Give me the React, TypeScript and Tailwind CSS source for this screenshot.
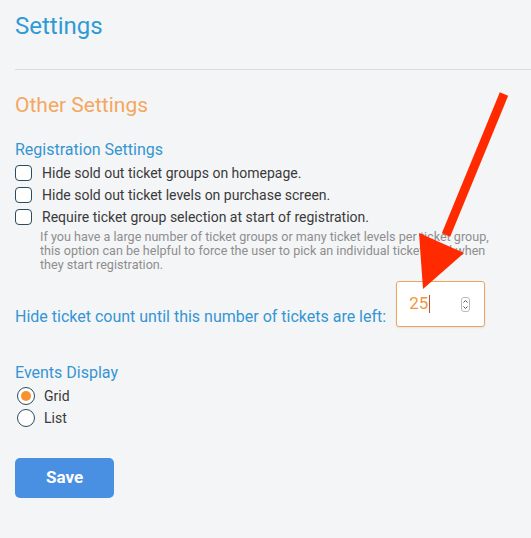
import React from "react";

function Checkbox() {
  return <span className="inline-block w-[17px] h-[16px] rounded-[4px] border-[1.5px] border-[#2d4b5c] bg-white shrink-0" />;
}

function Radio({ checked }: { checked?: boolean }) {
  return (
    <span className="w-[18px] h-[18px] rounded-full border-[1.5px] border-[#2d4b5c] bg-white flex items-center justify-center shrink-0">
      {checked && <span className="w-[10px] h-[10px] rounded-full bg-[#f7922f]" />}
    </span>
  );
}

export default function App() {
  return (
    <div className="relative w-[531px] h-[538px] bg-[#f4f5f7] overflow-hidden" style={{ fontFamily: "Roboto, 'Liberation Sans', sans-serif" }}>
      <div className="pl-[15px] pt-[12px]">
        <h1 className="text-[24px] leading-[28px] text-[#2f9ad4]">Settings</h1>
        <div className="mt-[29px] h-px bg-[#d9dbde]" />
        <h2 className="mt-[22px] text-[21px] leading-[26px] text-[#f5a760]">Other Settings</h2>
        <h3 className="mt-[22px] text-[16px] leading-[20px] text-[#3495d3]">Registration Settings</h3>
        <div className="mt-[5px] flex flex-col gap-[6px] text-[14px] leading-[16px] text-[#3a3a3a]">
          <label className="flex items-center gap-[10px]"><Checkbox />Hide sold out ticket groups on homepage.</label>
          <label className="flex items-center gap-[10px]"><Checkbox />Hide sold out ticket levels on purchase screen.</label>
          <label className="flex items-center gap-[10px]"><Checkbox />Require ticket group selection at start of registration.</label>
        </div>
        <p className="mt-[5px] ml-[25px] w-[472px] text-[12.6px] leading-[14px] text-[#8e8e8e]">
          If you have a large number of ticket groups or many ticket levels per ticket group, this option can be helpful to force the user to pick an individual ticket level when they start registration.
        </p>
        <div className="mt-[9px] flex items-end gap-[10px]">
          <span className="text-[16px] leading-[20px] text-[#3495d3] pb-0">Hide ticket count until this number of tickets are left:</span>
          <div className="w-[89px] h-[46px] bg-white border border-[#eea45a] rounded-[3px] shadow-[0_1px_2px_rgba(0,0,0,0.08)] flex items-center pl-[12px] pr-[14px]">
            <span className="text-[17px] text-[#f1963f]">25</span>
            <span className="w-px h-[18px] bg-[#c0522a] ml-[1px]" />
            <span className="ml-auto w-[9px] h-[15px] rounded-[3px] border border-[#b9b9b9] flex flex-col items-center justify-center">
              <svg width="5" height="11" viewBox="0 0 5 11" fill="none" stroke="#555" strokeWidth="1">
                <path d="M0.5 3.5 L2.5 1.5 L4.5 3.5" />
                <path d="M0.5 7.5 L2.5 9.5 L4.5 7.5" />
              </svg>
            </span>
          </div>
        </div>
        <h3 className="mt-[36px] text-[16px] leading-[20px] text-[#3495d3]">Events Display</h3>
        <div className="mt-[4px] ml-[2px] flex flex-col gap-[4px] text-[14px] leading-[18px] text-[#3a3a3a]">
          <label className="flex items-center gap-[9px]"><Radio checked />Grid</label>
          <label className="flex items-center gap-[9px]"><Radio />List</label>
        </div>
        <button className="mt-[31px] w-[99px] h-[40px] rounded-[5px] bg-[#4a90e2] text-white text-[17px] font-bold">Save</button>
      </div>
      <svg className="absolute left-0 top-0 pointer-events-none" width="531" height="538" viewBox="0 0 531 538">
        <line x1="504" y1="94" x2="446" y2="235" stroke="#ff2a00" strokeWidth="9" />
        <polygon points="419,233 464,253 423,289" fill="#ff2a00" />
      </svg>
    </div>
  );
}
